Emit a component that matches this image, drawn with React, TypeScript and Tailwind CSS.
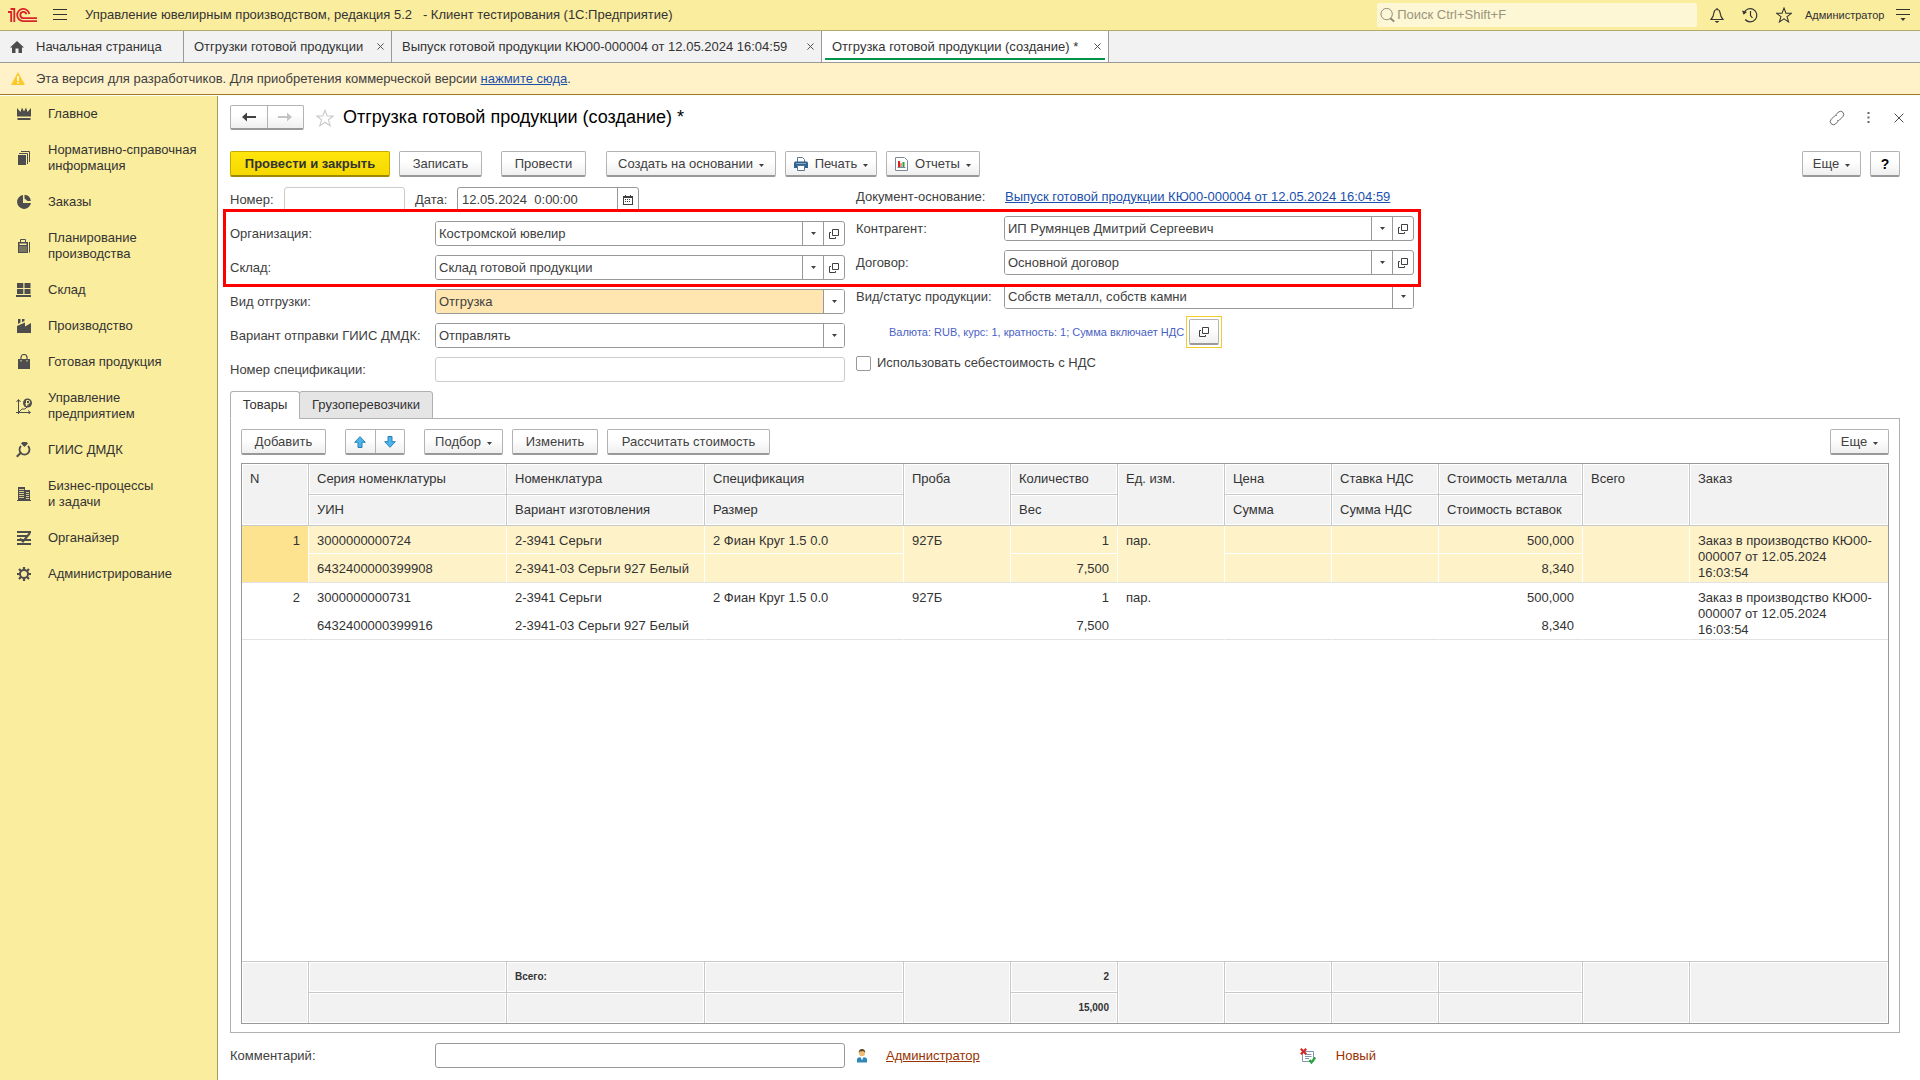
import React, { useState } from 'react'
import clsx from 'clsx'

const ink = '#4d4d4d'

const Caret: React.FC<{ className?: string }> = ({ className }) => (
  <svg width="5" height="3" viewBox="0 0 5 3" fill="#404040" className={className} aria-hidden="true">
    <path d="M0 0H5L2.5 3Z" />
  </svg>
)

const OpenIcon: React.FC = () => (
  <svg width="10" height="10" viewBox="0 0 10 10" fill="none" stroke="#404040" aria-hidden="true">
    <path d="M3.5 0.5H9.5V6.5H3.5ZM2 3.5H0.5V9.5H6.5V8" />
  </svg>
)

const Star: React.FC<{ size: number; color: string }> = ({ size, color }) => (
  <svg width={size} height={size} viewBox="0 0 18 18" fill="none" stroke={color} strokeWidth="1.2" aria-hidden="true">
    <path d="M9 1.2L11.2 6.9L17.2 7.1L12.4 10.8L14.2 16.8L9 13.3L3.8 16.8L5.6 10.8L0.8 7.1L6.8 6.9Z" />
  </svg>
)

const Cross: React.FC<{ size: number }> = ({ size }) => (
  <svg width={size} height={size} viewBox="0 0 8 8" fill="none" stroke={ink} aria-hidden="true">
    <path d="M0.5 0.5L7.5 7.5M7.5 0.5L0.5 7.5" strokeWidth={size > 8 ? 0.8 : 1.1} />
  </svg>
)

const sections: { title: string; icon: React.ReactNode }[] = [
  {
    title: 'Главное',
    icon: <path fill={ink} d="M1 2L4.5 6L6 1.5L8 5.5L10 1.5L11.5 6L15 2V10.5H1ZM1.5 12H14.5V14H1.5Z" />,
  },
  {
    title: 'Нормативно-справочная информация',
    icon: (
      <>
        <path fill={ink} d="M2 5H10V15H2Z" />
        <path fill="none" stroke={ink} d="M3 3.5H11.5V14M5 1.5H13.5V12" />
      </>
    ),
  },
  {
    title: 'Заказы',
    icon: (
      <>
        <path fill={ink} d="M7 1A7 7 0 1 0 15 9H7Z" />
        <path fill={ink} d="M8.5 0.8A7 7 0 0 1 14.8 7H11.5L8.5 4.5Z" />
      </>
    ),
  },
  {
    title: 'Планирование производства',
    icon: (
      <>
        <path fill="none" stroke={ink} d="M4.5 5V1.5H9.5V5M13.5 4V14.5" />
        <path fill={ink} fillRule="evenodd" d="M2 4H12V15H2ZM3.5 5.5V7H10.5V5.5ZM3.5 8.5V9.5H4.5V8.5ZM5.5 8.5V9.5H6.5V8.5ZM7.5 8.5V9.5H8.5V8.5ZM9.5 8.5V9.5H10.5V8.5ZM3.5 10.5V11.5H4.5V10.5ZM5.5 10.5V11.5H6.5V10.5ZM7.5 10.5V11.5H8.5V10.5ZM9.5 10.5V11.5H10.5V10.5ZM3.5 12.5V13.5H4.5V12.5ZM5.5 12.5V13.5H6.5V12.5ZM7.5 12.5V13.5H8.5V12.5ZM9.5 12.5V13.5H10.5V12.5Z" />
      </>
    ),
  },
  {
    title: 'Склад',
    icon: <path fill={ink} d="M1 1H7.3V6H1ZM8.5 1H14.5V6H8.5ZM1 7H7.3V12H1ZM8.5 7H14.5V12H8.5ZM0 13H15V15H0Z" />,
  },
  {
    title: 'Производство',
    icon: <path fill={ink} d="M2 1H4.5V4.5L2 6ZM6 1H8.5V3L6 4.2ZM1 8L9 4.5V8.5L15 5V15H1Z" />,
  },
  {
    title: 'Готовая продукция',
    icon: (
      <>
        <path fill={ink} d="M2 5H14V15H2Z" />
        <path fill="none" stroke={ink} strokeWidth="1.2" d="M5 6V3.5A2.5 2.5 0 0 1 11 3.5V6" />
        <path fill="#fbed9e" d="M4.5 6H5.5V7.5H4.5ZM10.5 6H11.5V7.5H10.5Z" />
      </>
    ),
  },
  {
    title: 'Управление предприятием',
    icon: (
      <>
        <path fill="none" stroke={ink} d="M2.5 16V2M0.5 4L2.5 1.5L4.5 4M0 14.5H14M12 12.5L14.5 14.5L12 16.5M3 14L6 11H9L11 9" />
        <circle cx="11.5" cy="5" r="4.5" fill={ink} />
        <path fill="none" stroke="#fbed9e" d="M10.5 8V2.5H12.3A1.4 1.4 0 0 1 12.3 5.5H9.5M9.5 6.8H12.5" />
      </>
    ),
  },
  {
    title: 'ГИИС ДМДК',
    icon: (
      <>
        <path fill={ink} d="M5 1.5L6.5 0H10.5L12 1.5L8.5 5Z" />
        <path fill="none" stroke={ink} strokeWidth="1.8" d="M5 4A5 5 0 1 0 12 4" />
        <path fill="none" stroke={ink} strokeWidth="2" d="M5 10.5L0.8 14.8" />
      </>
    ),
  },
  {
    title: 'Бизнес-процессы\nи задачи',
    icon: (
      <>
        <path fill={ink} d="M2 1H9V14H2ZM9 4H14V14H9ZM1 14H15V15H1Z" />
        <path stroke="#fbed9e" d="M3 3.5H8M3 5.5H8M3 7.5H8M3 9.5H8M3 11.5H8M10 6.5H13M10 8.5H13M10 10.5H13M10 12.5H13" strokeWidth="0.8" />
      </>
    ),
  },
  {
    title: 'Органайзер',
    icon: (
      <>
        <path fill={ink} d="M1 1H15V3H1ZM1 5H11V7H1ZM1 9H15V11H1ZM1 13H15V15H1Z" />
        <path fill="none" stroke={ink} strokeWidth="2" d="M4 8.5L7 11.5L14 3" />
      </>
    ),
  },
  {
    title: 'Администрирование',
    icon: (
      <>
        <circle cx="8" cy="8" r="4" fill="none" stroke={ink} strokeWidth="2" />
        <path stroke={ink} strokeWidth="2.2" d="M8 1V4M8 12V15M1 8H4M12 8H15M3 3L5.2 5.2M10.8 10.8L13 13M13 3L10.8 5.2M5.2 10.8L3 13" />
      </>
    ),
  },
]

const openTabs = [
  { title: 'Отгрузки готовой продукции', width: 'w-[208px]' },
  { title: 'Выпуск готовой продукции КЮ00-000004 от 12.05.2024 16:04:59', width: 'w-[430px]' },
  { title: 'Отгрузка готовой продукции (создание) *', width: 'w-[287px]', active: true },
]

// Columns with a second title are split into two lines in every row
const columns: { top: string; bottom?: string; width: string; right?: boolean }[] = [
  { top: 'N', width: 'w-[66px]', right: true },
  { top: 'Серия номенклатуры', bottom: 'УИН', width: 'w-[198px]' },
  { top: 'Номенклатура', bottom: 'Вариант изготовления', width: 'w-[198px]' },
  { top: 'Спецификация', bottom: 'Размер', width: 'w-[199px]' },
  { top: 'Проба', width: 'w-[107px]' },
  { top: 'Количество', bottom: 'Вес', width: 'w-[107px]', right: true },
  { top: 'Ед. изм.', width: 'w-[107px]' },
  { top: 'Цена', bottom: 'Сумма', width: 'w-[107px]', right: true },
  { top: 'Ставка НДС', bottom: 'Сумма НДС', width: 'w-[107px]' },
  { top: 'Стоимость металла', bottom: 'Стоимость вставок', width: 'w-[144px]', right: true },
  { top: 'Всего', width: 'w-[107px]', right: true },
  { top: 'Заказ', width: 'w-auto' },
]

const order = 'Заказ в производство КЮ00-000007 от 12.05.2024 16:03:54'

const goods = [
  {
    top: ['1', '3000000000724', '2-3941 Серьги', '2 Фиан Круг 1.5 0.0', '927Б', '1', 'пар.', '', '', '500,000', '', order],
    bottom: ['', '6432400000399908', '2-3941-03 Серьги 927 Белый', '', '', '7,500', '', '', '', '8,340', '', ''],
  },
  {
    top: ['2', '3000000000731', '2-3941 Серьги', '2 Фиан Круг 1.5 0.0', '927Б', '1', 'пар.', '', '', '500,000', '', order],
    bottom: ['', '6432400000399916', '2-3941-03 Серьги 927 Белый', '', '', '7,500', '', '', '', '8,340', '', ''],
  },
]

const totals = {
  top: ['', '', 'Всего:', '', '', '2', '', '', '', '', '', ''],
  bottom: ['', '', '', '', '', '15,000', '', '', '', '', '', ''],
}

const Button: React.FC<{
  children: React.ReactNode
  className?: string
  menu?: boolean
  primary?: boolean
  label?: string
}> = ({ children, className, menu, primary, label }) => (
  <button
    type="button"
    aria-label={label}
    className={clsx(
      'flex h-[26px] shrink-0 items-center justify-center rounded-[2px] border border-b-2 whitespace-nowrap',
      primary
        ? 'border-[#c9ab00] border-b-[#a08900] bg-linear-to-b from-[#ffe60d] to-[#f5d800] font-bold text-[#333]'
        : 'border-[#b3b3b3] border-b-[#999] bg-linear-to-b from-white from-40% to-[#efefef]',
      className,
    )}
  >
    {children}
    {menu && <Caret className="mt-1 ml-[6px]" />}
  </button>
)

const Field: React.FC<{
  id: string
  label: string
  value: string
  open?: boolean
  tinted?: boolean
}> = ({ id, label, value, open, tinted }) => (
  <div className="flex h-[25px] items-center">
    <label htmlFor={id} className="w-[148px] shrink-0 whitespace-nowrap group-data-[side=left]:w-[205px]">
      {label}
    </label>
    <div className="flex h-full flex-1 rounded-[3px] border border-[#999] bg-white">
      <div className="relative flex-1">
        <select
          id={id}
          defaultValue={value}
          className={clsx('h-full w-full appearance-none rounded-[2px] pl-[3px] outline-none', tinted ? 'bg-[#ffe6b0]' : 'bg-white')}
        >
          <option>{value}</option>
        </select>
        <span className="pointer-events-none absolute inset-y-0 right-0 flex w-[21px] items-center justify-center rounded-r-[2px] border-l border-[#999] bg-white">
          <Caret />
        </span>
      </div>
      {open && (
        <button type="button" aria-label="Открыть" className="flex w-[21px] items-center justify-center border-l border-[#999]">
          <OpenIcon />
        </button>
      )}
    </div>
  </div>
)

const Goods: React.FC = () => {
  const headCell = 'border-l border-b border-[#c8c8c8] bg-[#f2f2f2] px-2 align-top font-normal shadow-[inset_0_0_0_1px_#fff] first:border-l-0'

  return (
    <table className="h-full w-full table-fixed border-separate border-spacing-0 text-[#333]">
      <colgroup>
        {columns.map((column) => (
          <col key={column.top} className={column.width} />
        ))}
      </colgroup>
      <thead className="text-left">
        <tr className="h-[31px]">
          {columns.map((column) => (
            <th key={column.top} scope="col" rowSpan={column.bottom ? 1 : 2} className={clsx(headCell, 'pt-[7px]')}>
              {column.top}
            </th>
          ))}
        </tr>
        <tr className="h-[31px]">
          {columns.map(
            (column) =>
              column.bottom && (
                <th key={column.bottom} scope="col" className={clsx(headCell, 'border-l! pt-[7px]')}>
                  {column.bottom}
                </th>
              ),
          )}
        </tr>
      </thead>
      <tbody>
        {goods.map((row, index) => {
          const selected = index === 0
          const base = selected ? 'border-white bg-[#fef2c8]' : 'border-transparent'

          return (
            <React.Fragment key={row.top[0]}>
              <tr className="h-7">
                {columns.map((column, i) => (
                  <td
                    key={column.top}
                    rowSpan={column.bottom ? 1 : 2}
                    className={clsx(
                      'border-b border-l px-2 pt-[7px] align-top leading-4',
                      base,
                      i === 0 && 'border-l-0',
                      i === 0 && selected && 'bg-[#fde28f]!',
                      column.right && 'text-right',
                      !column.bottom && 'border-b-[#e2e2e2]!',
                    )}
                  >
                    {row.top[i]}
                  </td>
                ))}
              </tr>
              <tr className="h-[29px]">
                {columns.map(
                  (column, i) =>
                    column.bottom && (
                      <td
                        key={column.bottom}
                        className={clsx(
                          'border-b border-l px-2 pt-[7px] align-top leading-4 whitespace-nowrap',
                          base,
                          'border-b-[#e2e2e2]!',
                          column.right && 'text-right',
                        )}
                      >
                        {row.bottom[i]}
                      </td>
                    ),
                )}
              </tr>
            </React.Fragment>
          )
        })}
        <tr>
          <td colSpan={columns.length} />
        </tr>
      </tbody>
      <tfoot className="text-[10px] font-bold">
        <tr className="h-[31px]">
          {columns.map((column, i) => (
            <td
              key={column.top}
              rowSpan={column.bottom ? 1 : 2}
              className={clsx(
                'border-t border-l border-[#c8c8c8] bg-[#f2f2f2] px-2 shadow-[inset_0_0_0_1px_#fff]',
                i === 0 && 'border-l-0',
                column.right && 'text-right',
              )}
            >
              {totals.top[i]}
            </td>
          ))}
        </tr>
        <tr className="h-[31px]">
          {columns.map(
            (column, i) =>
              column.bottom && (
                <td
                  key={column.bottom}
                  className={clsx(
                    'border-t border-l border-[#c8c8c8] bg-[#f2f2f2] px-2 shadow-[inset_0_0_0_1px_#fff]',
                    column.right && 'text-right',
                  )}
                >
                  {totals.bottom[i]}
                </td>
              ),
          )}
        </tr>
      </tfoot>
    </table>
  )
}

const TopBar: React.FC = () => (
  <header className="flex h-[31px] shrink-0 items-center border-b border-[#b0aa6c] bg-[#fbed9e] pr-[10px] pl-2 text-[#333]">
    <svg width="29" height="14" viewBox="0 0 29 14" fill="none" stroke="#d8232a" strokeWidth="1.8" aria-label="1С">
      <path d="M0 4H3.2V14M2.5 1H6.3V14" />
      <path d="M21.3 6A6.1 6.1 0 1 0 15.2 13.1H29" />
      <path d="M18.4 6.2A3.1 3.1 0 1 0 15.2 10.1H29" />
    </svg>
    <button type="button" aria-label="Меню" className="ml-4">
      <svg width="14" height="12" viewBox="0 0 14 12" stroke="#333" aria-hidden="true">
        <path d="M0 0.5H14M0 5.5H14M0 10.5H14" />
      </svg>
    </button>
    <div className="ml-[18px] flex-1 whitespace-pre">
      Управление ювелирным производством, редакция 5.2{'   '}- Клиент тестирования (1С:Предприятие)
    </div>
    <label className="flex h-6 w-80 items-center gap-[2px] rounded-[2px] bg-[#fdf7d6] pl-[3px]">
      <svg width="16" height="16" viewBox="0 0 16 16" fill="none" stroke="#8a8774" aria-hidden="true">
        <circle cx="7" cy="7" r="6" />
        <path d="M11 11.5L15 15" strokeWidth="2" />
      </svg>
      <input type="text" placeholder="Поиск Ctrl+Shift+F" className="w-full bg-transparent outline-none placeholder:text-[#99957c]" />
    </label>
    <div className="ml-[13px] flex items-center gap-[18px]">
      <button type="button" aria-label="Оповещения">
        <svg width="14" height="16" viewBox="0 0 14 16" fill="none" stroke="#333" aria-hidden="true">
          <path d="M1 12.5C3 10.5 3.6 8.5 4 5.5C4.3 3.2 5.5 2.5 7 2.5C8.5 2.5 9.7 3.2 10 5.5C10.4 8.5 11 10.5 13 12.5ZM7 1V2.5" strokeWidth="1.2" />
          <path fill="#333" stroke="none" d="M4.5 14H9.5L7 16Z" />
        </svg>
      </button>
      <button type="button" aria-label="История">
        <svg width="16" height="16" viewBox="0 0 16 16" fill="none" stroke="#333" strokeWidth="1.2" aria-hidden="true">
          <path d="M2 6A6.6 6.6 0 1 1 3.2 12.5M8.5 4V8.5L10.5 11" />
          <path fill="#333" stroke="none" d="M0 3.5L5 5L1.6 7.8Z" />
        </svg>
      </button>
      <button type="button" aria-label="Избранное">
        <Star size={16} color="#333" />
      </button>
    </div>
    <button type="button" className="ml-[13px] w-[78px] text-left text-[11px]">
      Администратор
    </button>
    <button type="button" aria-label="Настройки" className="ml-[13px]">
      <svg width="14" height="14" viewBox="0 0 14 14" stroke="#333" aria-hidden="true">
        <path d="M0 1.5H14M0 6.5H14" />
        <path fill="#333" stroke="none" d="M4.5 10H9.5L7 13Z" />
      </svg>
    </button>
  </header>
)

export default function App() {
  const [tab, setTab] = useState('Товары')

  return (
    <div className="flex h-screen flex-col overflow-hidden bg-white font-['Liberation_Sans',Arial,sans-serif] text-[13px] leading-4 text-[#404040]">
      <TopBar />

      <nav className="flex h-8 shrink-0 border-b border-[#999] bg-[#f2f2f2] text-[#333]">
        <button type="button" className="flex w-[184px] items-center gap-3 border-r border-[#999] pl-[10px]">
          <svg width="14" height="12" viewBox="0 0 14 12" fill={ink} aria-hidden="true">
            <path d="M7 0L14 6.5H12V12H8.5V7.5H5.5V12H2V6.5H0Z" />
          </svg>
          Начальная страница
        </button>
        {openTabs.map((item) => (
          <div
            key={item.title}
            className={clsx('relative flex items-center justify-between border-r border-[#999] pr-[7px] pl-[10px]', item.width, item.active && 'bg-white')}
          >
            <button type="button" className="whitespace-nowrap">
              {item.title}
            </button>
            <button type="button" aria-label="Закрыть">
              <Cross size={7} />
            </button>
            {item.active && <span className="absolute inset-x-[3px] bottom-[2px] h-[2px] bg-[#00964a]" />}
          </div>
        ))}
      </nav>

      <div className="flex h-8 shrink-0 items-center border-b border-[#9a7d1c] bg-[#fff2c8] pl-[11px]">
        <svg width="14" height="13" viewBox="0 0 14 13" className="mr-[11px]" aria-hidden="true">
          <path fill="#fcc92a" d="M7 0L14 13H0Z" />
          <path fill="#fff" d="M6.2 4H7.8V9H6.2ZM6.2 10H7.8V11.6H6.2Z" />
        </svg>
        Эта версия для разработчиков. Для приобретения коммерческой версии&nbsp;
        <a href="#buy" className="text-[#1a4fad] underline">
          нажмите сюда
        </a>
        .
      </div>

      <div className="mt-px flex min-h-0 flex-1">
        <nav className="w-[218px] shrink-0 border-r border-[#a09a5e] bg-[#fbed9e] text-[#333]">
          {sections.map((section) => (
            <a key={section.title} href="#section" className="flex items-center gap-4 py-[10px] pr-3 pl-4">
              <svg width="16" height="16" viewBox="0 0 16 16" className="shrink-0" aria-hidden="true">
                {section.icon}
              </svg>
              <span className="whitespace-pre-line">{section.title}</span>
            </a>
          ))}
        </nav>

        <main className="flex min-w-0 flex-1 flex-col pt-[9px] pr-5 pb-3 pl-3">
          <div className="flex h-[25px] items-center">
            <div className="flex h-full w-[74px] rounded-[2px] border border-b-2 border-[#b3b3b3] border-b-[#999] bg-linear-to-b from-white from-40% to-[#efefef]">
              <button type="button" aria-label="Назад" className="flex flex-1 items-center justify-center border-r border-[#b3b3b3]">
                <svg width="14" height="10" viewBox="0 0 14 10" aria-hidden="true">
                  <path fill="#404040" d="M0 5L5 0.5V4H14V6H5V9.5Z" />
                </svg>
              </button>
              <button type="button" aria-label="Вперед" className="flex flex-1 items-center justify-center">
                <svg width="14" height="10" viewBox="0 0 14 10" aria-hidden="true">
                  <path fill="#c4c4c4" d="M14 5L9 0.5V4H0V6H9V9.5Z" />
                </svg>
              </button>
            </div>
            <button type="button" aria-label="В избранное" className="mr-[9px] ml-3">
              <Star size={18} color="#ccc" />
            </button>
            <h1 className="flex-1 self-start text-[18px] leading-6 text-black">Отгрузка готовой продукции (создание) *</h1>
            <button type="button" aria-label="Получить ссылку">
              <svg width="16" height="16" viewBox="0 0 16 16" fill="none" stroke="#666" aria-hidden="true">
                <path d="M7 4.5L9.5 2A3.2 3.2 0 0 1 14 6.5L10.5 10A3 3 0 0 1 8 10.8M9 11.5L6.5 14A3.2 3.2 0 0 1 2 9.5L5.5 6A3 3 0 0 1 8 5.2" />
              </svg>
            </button>
            <button type="button" aria-label="Действия" className="ml-[22px]">
              <svg width="3" height="11" viewBox="0 0 3 11" fill="#666" aria-hidden="true">
                <path d="M0.5 0H2.5V2H0.5ZM0.5 4.5H2.5V6.5H0.5ZM0.5 9H2.5V11H0.5Z" />
              </svg>
            </button>
            <button type="button" aria-label="Закрыть" className="mr-[-4px] ml-6">
              <Cross size={10} />
            </button>
          </div>

          <div className="mt-[21px] flex">
            <Button primary className="w-[160px]">
              Провести и закрыть
            </Button>
            <Button className="ml-[9px] w-[83px]">Записать</Button>
            <Button className="ml-[19px] w-[85px]">Провести</Button>
            <Button menu className="ml-[20px] w-[170px]">
              Создать на основании
            </Button>
            <Button menu className="ml-[9px] w-[92px]">
              <svg width="14" height="14" viewBox="0 0 14 14" className="mr-[7px]" aria-hidden="true">
                <path fill="#fff" stroke="#5a7690" d="M3.5 5V0.5H8.5L10.5 2.5V5" />
                <path fill="#2f6392" d="M0 5.5L1 4.5H13L14 5.5V11H0Z" />
                <path fill="#fff" stroke="#5a7690" d="M3.5 8.5H10.5V13.5H3.5Z" />
                <path stroke="#8ba7bf" d="M2 6.5H12" />
              </svg>
              Печать
            </Button>
            <Button menu className="ml-[9px] w-[94px]">
              <svg width="13" height="14" viewBox="0 0 13 14" className="mr-[7px]" aria-hidden="true">
                <path fill="#fff" stroke="#7b8a9a" d="M0.5 0.5H9.5L12.5 3.5V13.5H0.5Z" />
                <path fill="#d9261c" d="M3 4H5V10H3ZM5.5 6H6.5V10H5.5Z" />
                <path fill="#2f9e3b" d="M7.5 5H9.5V10H7.5Z" />
                <path stroke="#7b8a9a" d="M2.5 10.5H10.5" />
              </svg>
              Отчеты
            </Button>
            <Button menu className="ml-auto w-[59px]">
              Еще
            </Button>
            <Button className="ml-[9px] w-[30px] text-[14px] font-bold text-black" label="Справка">
              ?
            </Button>
          </div>

          <div className="relative mt-[10px] flex gap-[11px] self-start">
            <div data-side="left" className="group flex w-[615px] flex-col gap-[9px]">
              <div className="flex h-[25px] items-center">
                <label htmlFor="number" className="w-[54px]">
                  Номер:
                </label>
                <input id="number" type="text" className="h-full w-[121px] rounded-[3px] border border-[#ccc] px-1 outline-none" />
                <label htmlFor="date" className="ml-[10px] w-[42px]">
                  Дата:
                </label>
                <div className="flex h-full w-[182px] rounded-[3px] border border-[#999]">
                  <input id="date" type="text" defaultValue="12.05.2024  0:00:00" className="min-w-0 flex-1 px-1 outline-none" />
                  <button type="button" aria-label="Выбрать дату" className="flex w-[21px] items-center justify-center border-l border-[#999]">
                    <svg width="10" height="10" viewBox="0 0 10 10" aria-hidden="true">
                      <path fill="#404040" fillRule="evenodd" d="M0 1H2V0H3V1H7V0H8V1H10V10H0ZM1 3V9H9V3Z" />
                      <path fill="#404040" d="M2 4H3V5H2ZM4 4H5V5H4ZM6 4H7V5H6ZM2 6H3V7H2ZM4 6H5V7H4ZM6 6H7V7H6Z" />
                    </svg>
                  </button>
                </div>
              </div>
              <Field id="company" label="Организация:" value="Костромской ювелир" open />
              <Field id="store" label="Склад:" value="Склад готовой продукции" open />
              <Field id="shipment" label="Вид отгрузки:" value="Отгрузка" tinted />
              <Field id="giis" label="Вариант отправки ГИИС ДМДК:" value="Отправлять" />
              <div className="flex h-[25px] items-center">
                <label htmlFor="spec" className="w-[205px]">
                  Номер спецификации:
                </label>
                <input id="spec" type="text" className="h-full flex-1 rounded-[3px] border border-[#ccc] px-1 outline-none" />
              </div>
            </div>

            <div data-side="right" className="group flex w-[558px] flex-col gap-[9px]">
              <div className="flex h-5 items-center">
                <span className="w-[149px]">Документ-основание:</span>
                <a href="#base" className="text-[#1a4fad] underline">
                  Выпуск готовой продукции КЮ00-000004 от 12.05.2024 16:04:59
                </a>
              </div>
              <Field id="partner" label="Контрагент:" value="ИП Румянцев Дмитрий Сергеевич" open />
              <Field id="contract" label="Договор:" value="Основной договор" open />
              <Field id="metal" label="Вид/статус продукции:" value="Собств металл, собств камни" />
              <div className="-my-0.5 flex items-center">
                <span className="ml-[33px] w-[297px] text-[11px] whitespace-nowrap text-[#4a5fc4]">
                  Валюта: RUB, курс: 1, кратность: 1; Сумма включает НДС
                </span>
                <div className="border border-[#f5cc2e] p-[2px]">
                  <Button className="w-[30px]" label="Изменить валюту">
                    <OpenIcon />
                  </Button>
                </div>
              </div>
              <label className="flex items-center gap-[6px]">
                <input type="checkbox" className="h-[15px] w-[15px] appearance-none rounded-[2px] border border-[#999] bg-white checked:bg-[#00964a]" />
                Использовать себестоимость с НДС
              </label>
            </div>

            <div className="pointer-events-none absolute top-[22px] -left-[7px] h-[78px] w-[1198px] border-3 border-[#ff0000]" />
          </div>

          <div className="z-10 mt-[9px] -mb-px flex h-7" role="tablist">
            {['Товары', 'Грузоперевозчики'].map((name, index) => (
              <button
                key={name}
                type="button"
                role="tab"
                aria-selected={tab === name}
                onClick={() => setTab(name)}
                className={clsx(
                  'rounded-t-[3px] border border-[#b0b0b0] text-[#333]',
                  index === 0 ? 'w-[70px]' : '-ml-px w-[134px]',
                  tab === name ? 'border-b-white bg-white' : 'bg-[#e5e5e5]',
                )}
              >
                {name}
              </button>
            ))}
          </div>

          <section className="flex min-h-0 flex-1 flex-col border border-[#b0b0b0] px-[10px] pt-[10px] pb-2">
            <div className="mb-2 flex">
              <Button className="w-[85px]">Добавить</Button>
              <div className="ml-[19px] flex h-[26px] w-[60px] rounded-[2px] border border-b-2 border-[#b3b3b3] border-b-[#999] bg-linear-to-b from-white from-40% to-[#efefef]">
                <button type="button" aria-label="Вверх" className="flex flex-1 items-center justify-center border-r border-[#b3b3b3]">
                  <svg width="12" height="12" viewBox="0 0 12 12" aria-hidden="true">
                    <path fill="#4ab4ee" stroke="#2a7fb5" d="M6 0.7L11.3 6.3H8V11.5H4V6.3H0.7Z" />
                  </svg>
                </button>
                <button type="button" aria-label="Вниз" className="flex flex-1 items-center justify-center">
                  <svg width="12" height="12" viewBox="0 0 12 12" aria-hidden="true">
                    <path fill="#4ab4ee" stroke="#2a7fb5" d="M6 11.3L0.7 5.7H4V0.5H8V5.7H11.3Z" />
                  </svg>
                </button>
              </div>
              <Button menu className="ml-[19px] w-[79px]">
                Подбор
              </Button>
              <Button className="ml-[9px] w-[86px]">Изменить</Button>
              <Button className="ml-[9px] w-[163px]">Рассчитать стоимость</Button>
              <Button menu className="ml-auto w-[59px]">
                Еще
              </Button>
            </div>
            <div className="min-h-0 flex-1 border border-[#999]">
              <Goods />
            </div>
          </section>

          <div className="mt-[10px] flex h-[25px] items-center">
            <label htmlFor="comment" className="w-[205px]">
              Комментарий:
            </label>
            <input id="comment" type="text" className="h-full w-[410px] rounded-[3px] border border-[#999] px-1 outline-none" />
            <svg width="10" height="14" viewBox="0 0 10 14" className="mr-[19px] ml-3" aria-hidden="true">
              <path fill="#2f86b8" d="M0 13.5V10.5C0 9 1.5 8.3 3 8.2H7C8.5 8.3 10 9 10 10.5V13.5Z" />
              <path fill="#fff" d="M3.5 8L5 11.5L6.5 8Z" />
              <circle cx="5" cy="4.2" r="3" fill="#eebb70" />
              <path fill="#5d4520" d="M1.8 4C1.5 1 3 0 5 0C7 0 8.5 1 8.2 4L7 2.3H3Z" />
            </svg>
            <a href="#user" className="text-[#993300] underline">
              Администратор
            </a>
            <svg width="16" height="16" viewBox="0 0 16 16" className="mr-5 ml-80" aria-hidden="true">
              <path fill="#fff" stroke="#8196ab" d="M2.5 3.5H13.5V13.5H2.5Z" />
              <path stroke="#8196ab" d="M5 6.5H11.5M5 8.5H11.5M5 10.5H9" />
              <path stroke="#d62828" strokeWidth="2.2" d="M0.8 0.8L6.2 6.2M6.2 0.8L0.8 6.2" />
              <path fill="none" stroke="#23a53a" strokeWidth="2.2" d="M9.5 12L11.5 14.5L15.2 9.5" />
            </svg>
            <span className="text-[#993300]">Новый</span>
          </div>
        </main>
      </div>
    </div>
  )
}
